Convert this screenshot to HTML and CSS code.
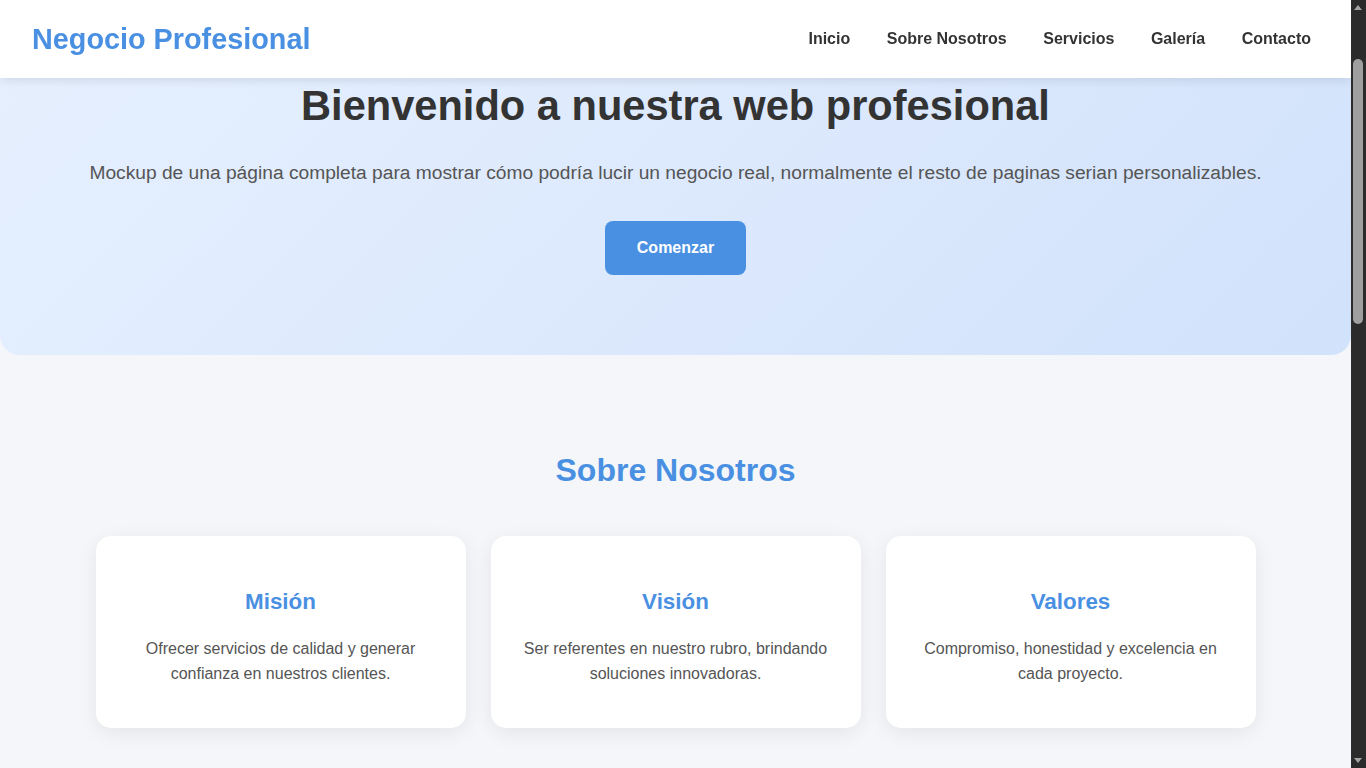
FILE: index.html
```html
<!DOCTYPE html>
<html lang="es">
<head>
<meta charset="utf-8">
<title>Negocio Profesional</title>
<link rel="stylesheet" href="styles.css">
</head>
<body>
<header class="site-header">
  <a class="logo" href="#">Negocio Profesional</a>
  <nav class="nav">
    <a href="#inicio">Inicio</a>
    <a href="#nosotros">Sobre Nosotros</a>
    <a href="#servicios">Servicios</a>
    <a href="#galeria">Galería</a>
    <a href="#contacto">Contacto</a>
  </nav>
</header>

<main class="page">
  <section class="hero" id="inicio">
    <h1 class="hero-title">Bienvenido a nuestra web profesional</h1>
    <p class="hero-text">Mockup de una página completa para mostrar cómo podría lucir un negocio real, normalmente el resto de paginas serian personalizables.</p>
    <a class="btn" href="#nosotros">Comenzar</a>
  </section>

  <section class="section" id="nosotros">
    <h2 class="section-title">Sobre Nosotros</h2>
    <div class="cards">
      <div class="card">
        <h3 class="card-title">Misión</h3>
        <p class="card-text">Ofrecer servicios de calidad y generar confianza en nuestros clientes.</p>
      </div>
      <div class="card">
        <h3 class="card-title">Visión</h3>
        <p class="card-text">Ser referentes en nuestro rubro, brindando soluciones innovadoras.</p>
      </div>
      <div class="card">
        <h3 class="card-title">Valores</h3>
        <p class="card-text">Compromiso, honestidad y excelencia en cada proyecto.</p>
      </div>
    </div>
  </section>
</main>

<div class="scrollbar" aria-hidden="true">
  <span class="sb-arrow sb-up"></span>
  <span class="sb-thumb"></span>
  <span class="sb-arrow sb-down"></span>
</div>
</body>
</html>
```

FILE: styles.css
```css
html,
body {
  height: 100%;
  overflow: hidden;
}

* {
  box-sizing: border-box;
}

body {
  margin: 0;
  font-family: "Liberation Sans", Arial, sans-serif;
  color: #333;
  background: #f4f6fa;
}

a {
  text-decoration: none;
}

.page {
  margin-right: 15px;
}

.site-header {
  position: fixed;
  top: 0;
  left: 0;
  right: 15px;
  z-index: 10;
  height: 78px;
  display: flex;
  align-items: center;
  justify-content: space-between;
  padding: 0 40px 0 32px;
  background: #ffffff;
  box-shadow: 0 2px 10px rgba(0, 0, 0, 0.1);
}

.logo {
  font-size: 28.8px;
  font-weight: 700;
  color: #4a90e2;
  line-height: 33px;
  padding-top: 1px;
}

.nav {
  display: flex;
  gap: 36.5px;
}

.nav a {
  font-size: 16px;
  font-weight: 700;
  color: #333;
  line-height: 20px;
}

.hero {
  display: flex;
  flex-direction: column;
  align-items: center;
  text-align: center;
  padding: 82px 32px 80px;
  background: linear-gradient(135deg, #e6f0fe 0%, #dde9fd 50%, #d1e2fb 100%);
  border-radius: 0 0 20px 20px;
}

.hero-title {
  margin: 0;
  font-size: 41.6px;
  line-height: 48px;
  font-weight: 700;
  color: #333;
}

.hero-text {
  margin: 27px 0 0;
  font-size: 19.2px;
  line-height: 31px;
  color: #555;
}

.btn {
  margin-top: 33px;
  display: inline-block;
  padding: 17px 32px 18px;
  font-size: 16px;
  line-height: 19px;
  font-weight: 700;
  color: #ffffff;
  background: #4a90e2;
  border-radius: 8px;
}

.section {
  padding: 97px 0 40px;
}

.section-title {
  margin: 0 0 47px;
  text-align: center;
  font-size: 32px;
  line-height: 37px;
  font-weight: 700;
  color: #4a90e2;
}

.cards {
  width: 1160px;
  margin: 0 auto;
  display: grid;
  grid-template-columns: repeat(3, 1fr);
  gap: 25px;
}

.card {
  background: #ffffff;
  border-radius: 15px;
  padding: 52px 32px 42px;
  text-align: center;
  box-shadow: 0 5px 20px rgba(0, 0, 0, 0.07);
}

.card-title {
  margin: 0 0 21px;
  font-size: 22.4px;
  line-height: 27px;
  font-weight: 700;
  color: #4a90e2;
}

.card-text {
  margin: 0;
  font-size: 16px;
  line-height: 25px;
  color: #555;
}

.scrollbar {
  position: fixed;
  top: 0;
  right: 0;
  bottom: 0;
  width: 15px;
  z-index: 20;
  background: #2b2b2b;
}

.sb-arrow {
  position: absolute;
  left: 3px;
  width: 0;
  height: 0;
  border-left: 4.5px solid transparent;
  border-right: 4.5px solid transparent;
}

.sb-up {
  top: 5px;
  border-bottom: 5px solid #a3a3a3;
}

.sb-down {
  bottom: 5px;
  border-top: 5px solid #a3a3a3;
}

.sb-thumb {
  position: absolute;
  top: 59px;
  left: 2px;
  width: 10px;
  height: 265px;
  border-radius: 5px;
  background: #9f9f9f;
}
```
